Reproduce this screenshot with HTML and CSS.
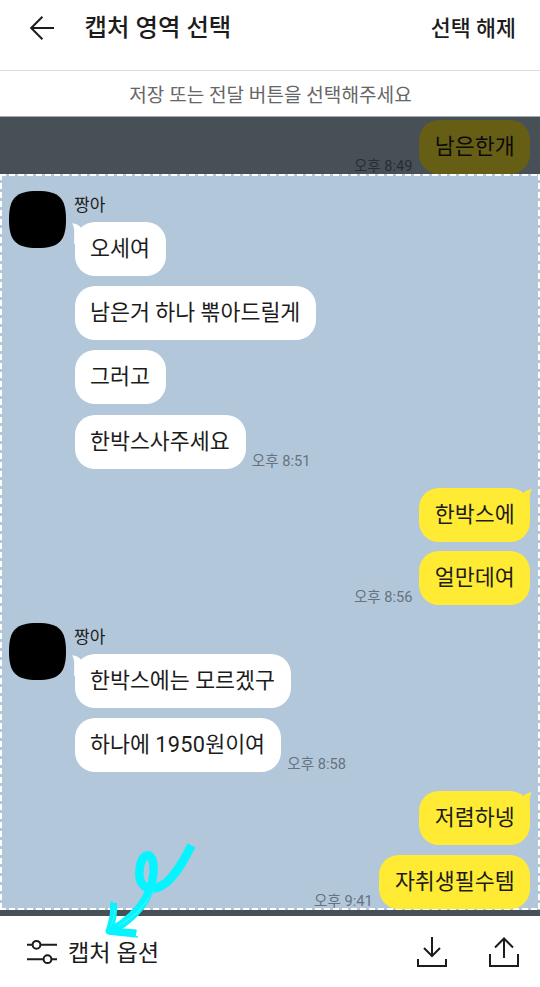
FILE: index.html
```html
<!DOCTYPE html>
<html lang="ko">
<head>
<meta charset="utf-8">
<title>캡처 영역 선택</title>
<link rel="stylesheet" href="styles.css">
</head>
<body>
<div class="app">
  <header class="header">
    <svg class="back" width="26" height="26" viewBox="0 0 26 26"><path d="M13.400 1.700 2.200 13l11.200 11.300M2.200 13H25"/></svg>
    <h1 class="title">캡처 영역 선택</h1>
    <span class="clear">선택 해제</span>
  </header>
  <p class="notice">저장 또는 전달 버튼을 선택해주세요</p>
  <main class="chat">
    <section class="outside outside-top">
      <div class="row mine"><time class="time">오후 8:49</time><div class="bubble">남은한개</div></div>
    </section>
    <section class="selection">
      <div class="group">
        <div class="avatar"><svg width="58" height="58" viewBox="0 0 58 58"><path d="M29.500 0C51 0 58 7 58 28.500S51 57 29.500 57 1 50 1 28.500 8 0 29.500 0Z"/></svg></div>
        <div class="messages">
          <div class="name">짱아</div>
          <div class="row"><div class="bubble first"><svg class="tail" width="16" height="22" viewBox="0 0 16 22"><path d="M0 1.300C4 1.500 6.800 3 8.800 5.600L15 12 4 22H2.200V9C2.200 6 1.500 3.500 0 1.300Z"/></svg>오세여</div></div>
          <div class="row"><div class="bubble">남은거 하나 뽂아드릴게</div></div>
          <div class="row"><div class="bubble">그러고</div></div>
          <div class="row"><div class="bubble">한박스사주세요</div><time class="time">오후 8:51</time></div>
        </div>
      </div>
      <div class="replies">
        <div class="row mine"><div class="bubble first"><svg class="tail" width="16" height="22" viewBox="0 0 16 22"><path d="M16 1.300C12 1.500 9.200 3 7.200 5.600L1 12l11 10h1.800V9C13.800 6 14.500 3.500 16 1.300Z"/></svg>한박스에</div></div>
        <div class="row mine"><time class="time">오후 8:56</time><div class="bubble">얼만데여</div></div>
      </div>
      <div class="group">
        <div class="avatar"><svg width="58" height="58" viewBox="0 0 58 58"><path d="M29.500 0C51 0 58 7 58 28.500S51 57 29.500 57 1 50 1 28.500 8 0 29.500 0Z"/></svg></div>
        <div class="messages">
          <div class="name">짱아</div>
          <div class="row"><div class="bubble first"><svg class="tail" width="16" height="22" viewBox="0 0 16 22"><path d="M0 1.300C4 1.500 6.800 3 8.800 5.600L15 12 4 22H2.200V9C2.200 6 1.500 3.500 0 1.300Z"/></svg>한박스에는 모르겠구</div></div>
          <div class="row"><div class="bubble">하나에 <span class="digits">1950</span>원이여</div><time class="time">오후 8:58</time></div>
        </div>
      </div>
      <div class="replies">
        <div class="row mine"><div class="bubble first"><svg class="tail" width="16" height="22" viewBox="0 0 16 22"><path d="M16 1.300C12 1.500 9.200 3 7.200 5.600L1 12l11 10h1.800V9C13.800 6 14.500 3.500 16 1.300Z"/></svg>저렴하넹</div></div>
        <div class="row mine"><time class="time">오후 9:41</time><div class="bubble">자취생필수템</div></div>
      </div>
    </section>
    <div class="outside outside-bottom"></div>
  </main>
  <footer class="footer">
    <svg class="icon" width="32" height="26" viewBox="0 0 32 26"><path d="M1 5.800h5.500M14.500 5.800H31M1 20.200h16.500M25.500 20.200H31"/><circle cx="10.500" cy="5.800" r="3.900"/><circle cx="21.500" cy="20.200" r="3.900"/></svg>
    <span class="option">캡처 옵션</span>
    <svg class="icon save" width="30" height="32" viewBox="0 0 30 32"><path d="M15 1v19M7 12l8 8 8-8M1 23v7h28v-7"/></svg>
    <svg class="icon share" width="30" height="32" viewBox="0 0 30 32"><path d="M15 22V2.500M6 11.500l9-9 9 9M1 18v12h28V18"/></svg>
  </footer>
  <svg class="scribble" width="100" height="104" viewBox="0 0 100 104">
    <path class="stroke" d="M91.500 6.500C80 29 69 46 56 49C44 52 38 43 39.500 31C41 14 52 11 53.500 26C55 47 45 73 11 92"/>
    <path class="head" d="M13.500 64C14.500 74 12 84 9 92C18 93 27 93 36 94"/>
    <path class="hair" d="M93.500 9C83 32 72 47 59 52M9 95 38 98M12 62 11 66M36 91 35 97"/>
    <path class="grain" d="M54 51C44 69 32 80 18 87M48 59C40 72 31 79 23 84M14 68C15 77 13 82 11 87"/>
  </svg>
</div>
</body>
</html>
```
FILE: styles.css
```css
* { box-sizing: border-box; }
body { margin: 0; background: #fff; color: #1c1c1d; font-family: Roboto, "Noto Sans CJK KR", sans-serif; }
.app { position: relative; display: flex; flex-direction: column; width: 540px; height: 987px; overflow: hidden; }
.header { display: flex; align-items: center; height: 71px; padding: 0 24px 14px 29px; border-bottom: 1px solid #dcdcdc; }
.back { fill: none; stroke: #1c1c1d; stroke-width: 2; }
.title { margin: 0 0 0 29.500px; font-size: 24.400px; font-weight: 500; line-height: 32px; }
.clear { margin: 1px 0 0 auto; font-size: 21.700px; font-weight: 500; line-height: 32px; }
.notice { margin: 0; height: 45px; font-size: 19.100px; line-height: 49px; text-align: center; text-indent: 1px; color: #666; }
.chat { height: 800px; background: #b2c7da; border-top: 1px solid #a2a8ad; }
.outside { position: relative; }
.outside::after { content: ""; position: absolute; inset: 0; background: rgba(0, 0, 0, .6); }
.outside-top { height: 57px; padding: 3px 9.800px 0; }
.outside-bottom { height: 6px; }
.selection {
  height: 736px; padding: 17px 9.800px 0 8px;
  background:
    repeating-linear-gradient(90deg, #fff 0 6px, transparent 6px 9px) 0 0 / 100% 2px no-repeat,
    repeating-linear-gradient(90deg, #fff 0 6px, transparent 6px 9px) 0 100% / 100% 2px no-repeat,
    repeating-linear-gradient(#fff 0 6px, transparent 6px 9px) 0 0 / 2px 100% no-repeat,
    repeating-linear-gradient(#fff 0 6px, transparent 6px 9px) 100% 0 / 2px 100% no-repeat;
}
.group { display: flex; gap: 8.500px; }
.avatar { width: 58px; height: 58px; }
.messages { display: flex; flex-direction: column; gap: 10.200px; }
.name { height: 22px; margin-bottom: -1.200px; font-size: 17px; line-height: 28px; text-indent: -.5px; }
.row { display: flex; align-items: flex-end; gap: 6px; }
.mine { justify-content: flex-end; }
.bubble { position: relative; height: 54px; padding: 0 16.200px 0 15.500px; border-radius: 20px; background: #fff; font-size: 21.700px; line-height: 54px; white-space: nowrap; }
.mine .bubble { padding: 0 15.600px 0 16.300px; background: #ffeb33; }
.digits { letter-spacing: .3px; }
.tail { position: absolute; top: 0; left: -2.200px; fill: #fff; }
.mine .tail { left: auto; right: -2.200px; fill: #ffeb33; }
.time { font-size: 14.600px; line-height: 15px; color: #66727d; }
.replies { display: flex; flex-direction: column; gap: 9.500px; margin: 19.400px 0 17.300px; }
.footer { display: flex; align-items: center; height: 71px; padding: 0 21px 0 26px; }
.icon { fill: none; stroke: #1c1c1d; stroke-width: 2; }
.option { margin: 2px 0 0 10px; font-size: 23.200px; line-height: 32px; }
.save { margin-left: auto; }
.share { margin-left: 42px; }
.scribble { position: absolute; left: 100px; top: 839px; fill: none; stroke: #05f4ff; stroke-linejoin: round; }
.stroke { stroke-width: 8.500; }
.head { stroke-width: 7; }
.hair { stroke-width: 1.500; }
.grain { stroke: #7df5ff; stroke-width: .4; }
```
